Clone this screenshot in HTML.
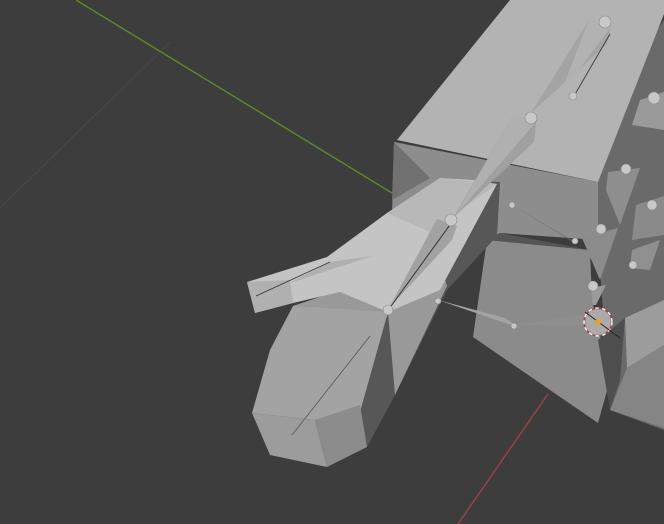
<!DOCTYPE html>
<html><head><style>
html,body{margin:0;padding:0;background:#3d3d3d;width:664px;height:524px;overflow:hidden}
svg{display:block}
</style></head><body>
<svg width="664" height="524" viewBox="0 0 664 524" xmlns="http://www.w3.org/2000/svg">
<rect width="664" height="524" fill="#3d3d3d"/>
<line x1="0" y1="208" x2="170" y2="42" stroke="#484848" stroke-width="1"/>
<line x1="76" y1="0" x2="392" y2="193" stroke="#5f8a26" stroke-width="1.4"/>
<line x1="548" y1="394" x2="458" y2="524" stroke="#a04048" stroke-width="1.4"/>
<polygon points="657,30 664,20 664,430 610,410 598,240 598,182" fill="#6a6a6a"/>
<polygon points="510,0 664,0 664,14 598,182 397,140" fill="#b3b3b3"/>
<polygon points="394,142 598,182 598,240 500,233 480,248 392,215" fill="#8d8d8d"/>
<polygon points="394,142 430,178 392,200" fill="#717171"/>
<polygon points="640,100 664,92 664,130 632,125" fill="#9a9a9a"/>
<polygon points="608,172 640,168 620,225 606,190" fill="#8e8e8e"/>
<polygon points="636,205 664,196 664,235 632,240" fill="#8a8a8a"/>
<polygon points="632,250 660,240 650,270 630,268" fill="#909090"/>
<polygon points="582,238 618,228 600,280" fill="#8c8c8c"/>
<polygon points="580,290 606,285 596,305 578,305" fill="#9a9a9a"/>
<polygon points="487,240 590,250 592,300 610,380 598,423 473,337" fill="#8b8b8b"/>
<polygon points="500,233 590,250 487,240" fill="#555"/>
<polygon points="598,340 625,318 620,380 610,410" fill="#4e4e4e"/>
<polygon points="625,318 664,300 664,345 627,368" fill="#9c9c9c"/>
<polygon points="627,368 664,345 664,428 610,410" fill="#858585"/>
<polygon points="440,180 500,182 497,236 447,290 395,395 367,447 360,412 388,310" fill="#575757"/>
<polygon points="293,306 350,290 388,312 360,412 315,420 252,413 270,350" fill="#a3a3a3"/>
<polygon points="293,306 340,290 388,260 430,232 447,286 395,395 388,312" fill="#999"/>
<polygon points="252,413 315,420 327,467 270,455" fill="#9c9c9c"/>
<polygon points="315,420 360,405 367,447 327,467" fill="#8c8c8c"/>
<polygon points="247,282 327,257 387,213 440,178 473,180 497,184 440,290 388,312 340,292 293,303 255,313" fill="#c4c4c4"/>
<polygon points="247,282 255,313 293,303 290,280" fill="#b0b0b0"/>
<polygon points="387,213 440,178 497,184 430,232" fill="#b8b8b8"/>
<!-- bones -->
<polygon points="589,20 611,27 607,44 531,113" fill="#a4a4a4"/>
<polygon points="589,20 611,27 560,95" fill="#b2b2b2"/>
<line x1="610" y1="34" x2="574" y2="96" stroke="#444" stroke-width="1"/>
<polygon points="513,115 536,122 534,142 453,218" fill="#a0a0a0"/>
<polygon points="513,115 536,122 455,216" fill="#b0b0b0"/>
<polygon points="437,219 457,226 452,240 389,308" fill="#a2a2a2"/>
<line x1="452" y1="222" x2="389" y2="309" stroke="#333" stroke-width="1"/>
<polygon points="438,300 505,318 520,328" fill="#a3a3a3"/>
<polygon points="515,325 580,315 590,325" fill="#8e8e8e"/>
<polygon points="512,205 570,240 580,245" fill="#6a6a6a"/>
<polygon points="290,283 330,262 372,256" fill="#b0b0b0"/>
<line x1="256" y1="296" x2="330" y2="262" stroke="#333" stroke-width="0.8"/>
<line x1="292" y1="435" x2="370" y2="336" stroke="#555" stroke-width="0.8"/>
<g fill="#c8c8c8" stroke="#888" stroke-width="0.6">
<circle cx="605" cy="22" r="6"/><circle cx="531" cy="118" r="6"/><circle cx="451" cy="220" r="6"/>
<circle cx="388" cy="310" r="5"/><circle cx="573" cy="96" r="4"/><circle cx="512" cy="205" r="3"/>
<circle cx="438" cy="301" r="3"/><circle cx="514" cy="326" r="3"/><circle cx="654" cy="98" r="6"/>
<circle cx="626" cy="169" r="5"/><circle cx="652" cy="205" r="5"/><circle cx="601" cy="229" r="5"/>
<circle cx="633" cy="265" r="4"/><circle cx="593" cy="286" r="5"/><circle cx="575" cy="241" r="3"/>
<circle cx="598" cy="322" r="13" fill="#aaa"/>
</g>
<circle cx="598" cy="322" r="14" fill="none" stroke="#fff" stroke-width="1.3" stroke-dasharray="4 3"/>
<circle cx="598" cy="322" r="14" fill="none" stroke="#d03030" stroke-width="1.3" stroke-dasharray="3 4" stroke-dashoffset="3.5"/>
<line x1="585" y1="312" x2="620" y2="338" stroke="#222" stroke-width="1"/>
<circle cx="598" cy="322" r="3" fill="#f0a020"/>
</svg>
</body></html>
